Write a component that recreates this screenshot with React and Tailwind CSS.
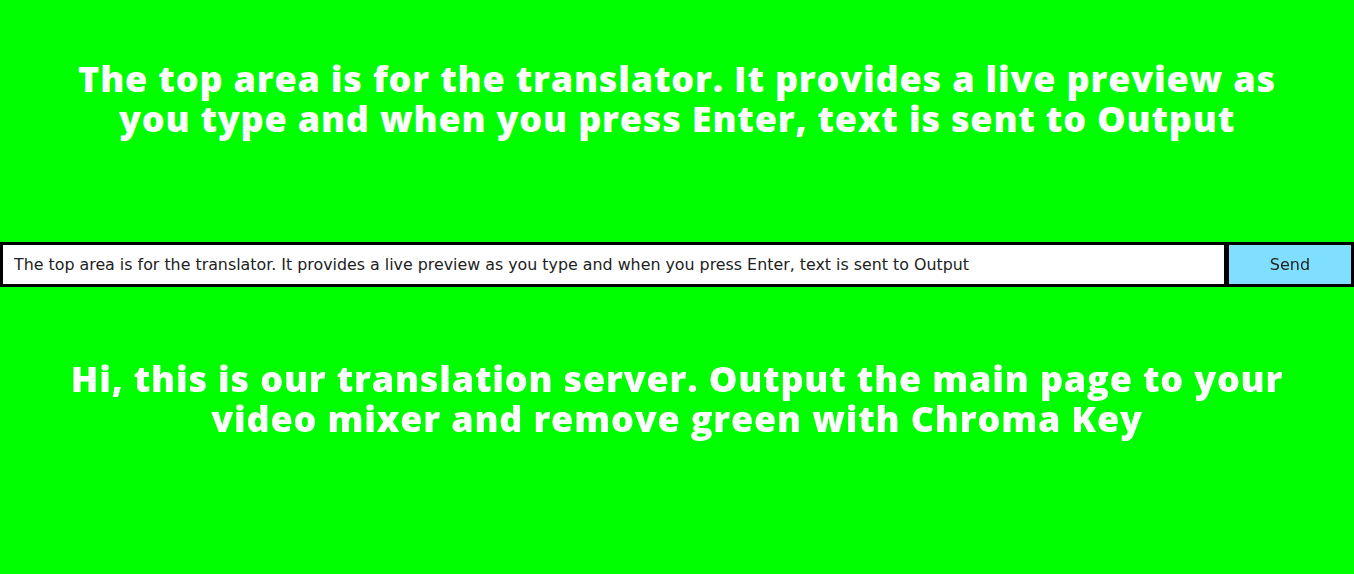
import { useEffect, useRef } from "react";

export default function App() {
  const inputRef = useRef(null);

  useEffect(() => {
    const el = inputRef.current;
    if (el) {
      el.focus();
      el.setSelectionRange(el.value.length, el.value.length);
    }
  }, []);

  const heading =
    "text-white font-extrabold text-center text-[36px] leading-[40px] tracking-[0.8px] font-['Open_Sans',sans-serif]";
  return (
    <div className="flex flex-col h-[574px] w-full bg-[#00ff00] overflow-hidden">
      {/* Translator preview */}
      <div className="h-[242px] pt-[59px]">
        <h1 className={heading}>
          <span className="block">The top area is for the translator. It provides a live preview as</span>
          <span className="block">you type and when you press Enter, text is sent to Output</span>
        </h1>
      </div>

      {/* Input bar */}
      <div className="flex h-[45px] bg-black p-[3px] gap-[5px]">
        <input
          ref={inputRef}
          className="flex-1 bg-white px-[11px] text-[15.85px] text-[#222] caret-black outline-none font-['DejaVu_Sans',sans-serif]"
          defaultValue="The top area is for the translator. It provides a live preview as you type and when you press Enter, text is sent to Output"
        />
        <button className="w-[122px] bg-[#80dfff] text-[16px] text-[#222] font-['DejaVu_Sans',sans-serif]">
          Send
        </button>
      </div>

      {/* Output */}
      <div className="flex-1 pt-[72px]">
        <h1 className={heading}>
          <span className="block">Hi, this is our translation server. Output the main page to your</span>
          <span className="block">video mixer and remove green with Chroma Key</span>
        </h1>
      </div>
    </div>
  );
}
